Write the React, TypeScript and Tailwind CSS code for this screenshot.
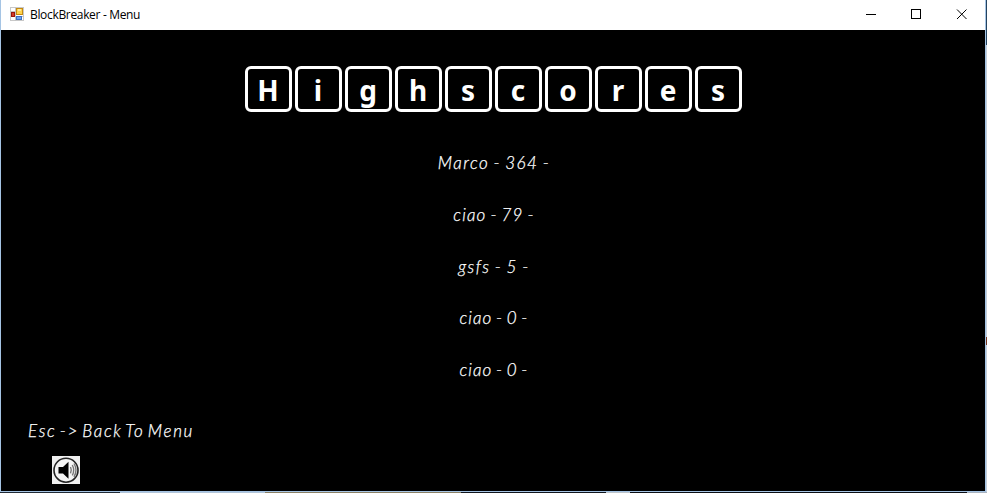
import React from "react";

const rows = [
  { text: "Marco - 364 -", cls: "tracking-[1.5px] [word-spacing:-1.6px]" },
  { text: "ciao - 79 -", cls: "tracking-[1.2px] [word-spacing:-1.6px]" },
  { text: "gsfs - 5 -", cls: "tracking-[1.4px] [word-spacing:-1.3px]" },
  { text: "ciao - 0 -", cls: "tracking-[1px] [word-spacing:-1.5px]" },
  { text: "ciao - 0 -", cls: "tracking-[1px] [word-spacing:-1.5px]" },
];

const hand = "font-['Lato',sans-serif] font-light italic text-[17px] text-white whitespace-pre [-webkit-text-stroke:0.25px_white]";

function FormIcon() {
  return (
    <svg width="14" height="14" viewBox="0 0 14 14" shapeRendering="crispEdges">
      <rect x=".5" y=".5" width="13" height="13" fill="#fff" stroke="#c8c8c8" />
      <path d="M5.5 0v14M0 4.5h6M0 9.5h14" stroke="#c4c4c4" />
      <rect x="6.5" y="1.5" width="6" height="6" fill="#ffd34d" stroke="#c48a12" />
      <rect x="8" y="2" width="3" height="2" fill="#ffeaa0" />
      <rect x="1.5" y="5.5" width="3" height="4" fill="#d33a27" stroke="#98170e" />
      <rect x="6.5" y="9.5" width="5" height="3" fill="#6fa5ee" stroke="#3c70c4" />
    </svg>
  );
}

function Speaker() {
  return (
    <svg width="28" height="28" viewBox="0 0 28 28" className="bg-[#f0f0f0]">
      <circle cx="14" cy="14.2" r="12" fill="#f4f4f4" stroke="#222" strokeWidth="1.6" />
      <path d="M6.5 11h4.5l5.5-5.3v17l-5.5-5.3H6.5z" fill="#000" />
      <path d="M18.5 11q1.6 3.2 0 6.4M20.3 9q2.8 5.2 0 10.4M22 7.5q4 6.7 0 13.4" fill="none" stroke="#777" strokeWidth="1.4" />
    </svg>
  );
}

export default function App() {
  return (
    <div className="w-[987px] h-[493px] overflow-hidden bg-[#b5c3d2] flex flex-col">
      <div className="flex h-[492px]">
        <main className="w-[986px] h-[492px] border-l border-r border-b border-[#a5c4e4] bg-black flex flex-col">
          <header className="h-[30px] shrink-0 bg-white flex items-center">
            <div className="ml-[9px] mb-[2px]"><FormIcon /></div>
            <span className="ml-[6px] font-['Open_Sans',sans-serif] text-[12px] leading-[30px] tracking-[-0.33px] text-black">BlockBreaker - Menu</span>
            <svg className="ml-auto" width="138" height="30" viewBox="847 0 138 30" fill="none" stroke="#000">
              <path d="M866 14.5h10" />
              <rect x="911.5" y="9.5" width="9" height="9" />
              <path d="M957 9.5l9.5 9.5M966.5 9.5l-9.5 9.5" />
            </svg>
          </header>
          <h1 className="mt-[36px] ml-[244px] h-[46px] shrink-0 flex gap-[3px]">
            {"Highscores".split("").map((letter, i) => (
              <span key={i} className="w-[47px] h-[46px] border-[3px] border-white rounded-[6px] flex justify-center font-['Noto_Sans',sans-serif] font-bold text-[28px] leading-[42px] text-white">
                <span className="-ml-px">{letter}</span>
              </span>
            ))}
          </h1>
          <section className="mt-[38px] pl-[2px] flex flex-col gap-[25.75px] shrink-0">
            {rows.map((r, i) => (
              <p key={i} className={`${hand} h-[26px] leading-[26px] text-center ${r.cls}`}>{r.text}</p>
            ))}
          </section>
          <p className={`${hand} ml-[27px] mt-[35px] h-[26px] leading-[26px] shrink-0 tracking-[1.65px] [word-spacing:-2.6px]`}>{"Esc -> Back To Menu"}</p>
          <div className="ml-[51px] mt-[12px] shrink-0"><Speaker /></div>
        </main>
        <aside className="w-px flex flex-col">
          <div className="h-[45px] bg-[#24435f]" />
          <div className="h-[292px] bg-[#c3cedb]" />
          <div className="h-[8px] bg-[#76351e]" />
          <div className="grow bg-[#c3cedb]" />
        </aside>
      </div>
      <div className="h-px flex">
        <div className="w-[120px] bg-[#202935]" />
        <div className="w-[145px] bg-[#b1c4d8]" />
        <div className="w-[196px] bg-[#8b8064]" />
        <div className="w-[145px] bg-[#10151c]" />
        <div className="w-[24px] bg-[#bdc4ca]" />
        <div className="w-[337px] bg-[#0b0e13]" />
        <div className="grow bg-[#a9b3bf]" />
      </div>
    </div>
  );
}
